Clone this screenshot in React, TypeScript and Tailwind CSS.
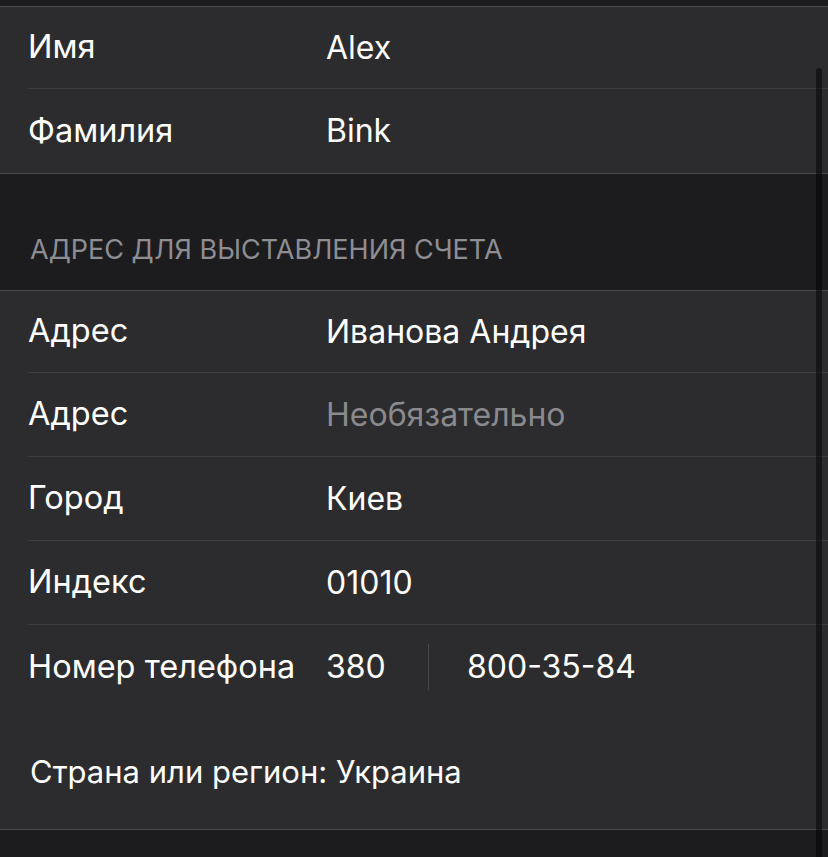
import React from 'react';

type Row = { label: string; value: string; placeholder?: boolean };

const nameRows: Row[] = [
  { label: 'Имя', value: 'Alex' },
  { label: 'Фамилия', value: 'Bink' },
];

const addressRows: Row[] = [
  { label: 'Адрес', value: 'Иванова Андрея' },
  { label: 'Адрес', value: 'Необязательно', placeholder: true },
  { label: 'Город', value: 'Киев' },
  { label: 'Индекс', value: '01010' },
];

const FieldRow: React.FC<{ row: Row; first?: boolean; last?: boolean }> = ({ row, first, last }) => (
  <div className="pl-[28px]">
    <div
      className={`flex items-center ${first ? 'h-[82px]' : 'h-[84px]'} ${last ? '' : 'border-b border-[#3d3d40]'}`}
    >
      <div className="w-[298px] shrink-0 text-white text-[32.5px]">{row.label}</div>
      <div className={row.placeholder ? 'text-[#8a8a8e]' : 'text-white'}>{row.value}</div>
    </div>
  </div>
);

const App: React.FC = () => {
  return (
    <div
      className="relative min-h-screen overflow-hidden bg-[#1c1c1e] text-[32px]"
      style={{ fontFamily: 'Inter, "Noto Sans", sans-serif' }}
    >
      <div className="h-[7px] border-b border-[#4a4a4d]" />

      <div className="bg-[#2c2c2e] border-b border-[#4a4a4d]">
        {nameRows.map((r, i) => (
          <FieldRow key={r.label} row={r} first={i === 0} last={i === nameRows.length - 1} />
        ))}
      </div>

      <div className="h-[116px] flex items-end pl-[30px] pb-[20px] text-[27px] text-[#8d8d93] uppercase">
        Адрес для выставления счета
      </div>

      <div className="bg-[#2c2c2e] border-y border-[#4a4a4d]">
        {addressRows.map((r, i) => (
          <FieldRow key={i} row={r} first={i === 0} />
        ))}

        <div className="pl-[28px]">
          <div className="flex items-center h-[84px]">
            <div className="w-[298px] shrink-0 text-white text-[32.5px]">Номер телефона</div>
            <div className="w-[102px] text-white">380</div>
            <div className="w-px h-[46px] bg-[#48484a]" />
            <div className="pl-[38px] text-white">800-35-84</div>
          </div>
        </div>

        <div className="h-[120px] pl-[30px] pt-[43px] text-white text-[31px] leading-[40px]">
          Страна или регион: Украина
        </div>
      </div>

      <div className="absolute right-[6px] top-[68px] bottom-0 w-[6px] rounded-t-full bg-black/50" />
    </div>
  );
};

export default App;
